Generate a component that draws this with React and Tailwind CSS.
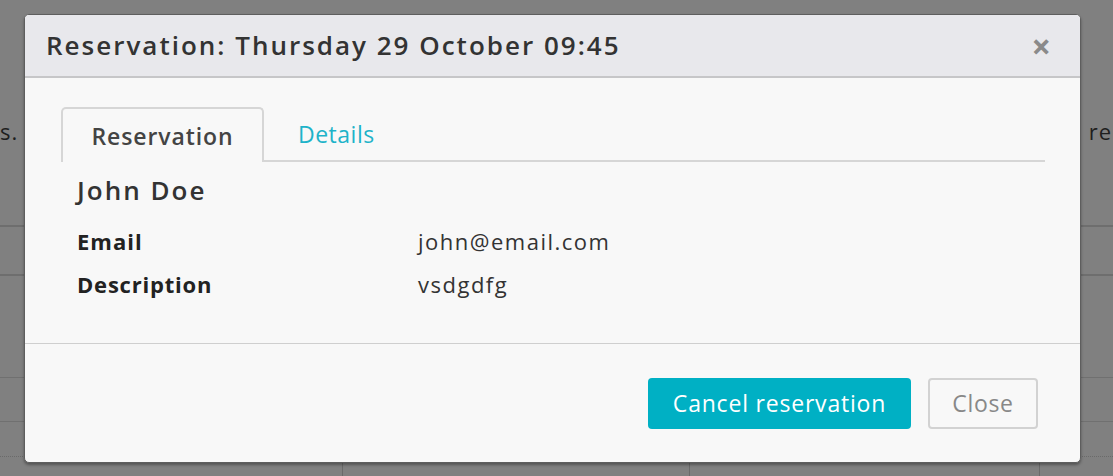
export default function App() {
  return (
    <div className="relative h-[476px] w-[1113px] overflow-hidden bg-[#808080]" style={{ fontFamily: "'Open Sans', sans-serif" }}>
      {/* page behind the overlay */}
      <div className="flex h-full flex-col">
        <div className="flex h-[225px] items-start justify-between pr-[1px] pt-[115px] text-[22px] tracking-[1px] text-[#1e1e1e]">
          <span>s.</span>
          <span>re</span>
        </div>
        <div className="h-[49px] border-t-2 border-[#6e6e6e]" />
        <div className="h-[103px] border-t-2 border-[#6e6e6e]" />
        <div className="h-[44px] border-t border-[#707070]" />
        <div className="h-[35px] border-t border-[#707070]" />
        <div className="grid flex-1 grid-cols-[343px_347px_350px_1fr] border-t border-dotted border-[#6a6a6a]">
          <div className="border-r border-[#6a6a6a]" />
          <div className="border-r border-[#6a6a6a]" />
          <div className="border-r border-[#6a6a6a]" />
          <div />
        </div>
      </div>

      {/* modal */}
      <div className="absolute left-[24px] top-[14px] flex h-[449px] w-[1057px] flex-col overflow-hidden rounded-[5px] border border-[#5e5e5e] bg-[#f8f8f8] shadow-[0_2px_3px_rgba(0,0,0,0.35)]">
        <div className="flex h-[63px] shrink-0 items-center justify-between border-b-2 border-[#c6c6c8] bg-[#e8e8ec] pl-[21px] pr-[29px]">
          <h2 className="text-[26px] font-semibold tracking-[2px] text-[#333]">Reservation: Thursday 29 October 09:45</h2>
          <span className="mt-[1px] text-[34px] font-bold leading-none text-[#8a8a8a]">×</span>
        </div>

        <div className="flex h-[266px] shrink-0 flex-col border-b border-[#cfcfcf] pl-[36px] pr-[35px] pt-[29px]">
          <div className="flex h-[55px] items-end border-b-2 border-[#d6d6d6]">
            <div className="-mb-[2px] flex h-[55px] w-[203px] items-center justify-center rounded-t-[5px] border-2 border-b-0 border-[#d6d6d6] bg-[#f8f8f8] pt-[1px] text-[23px] font-semibold tracking-[0.9px] text-[#444]">
              Reservation
            </div>
            <div className="flex h-[53px] items-center pl-[34px] pt-[1px] text-[23px] tracking-[0.5px] text-[#1eb3c9]">Details</div>
          </div>
          <div className="pl-[16px]">
            <div className="mt-[11px] text-[26px] font-semibold leading-[34px] tracking-[2px] text-[#333]">John Doe</div>
            <div className="mt-[20px] grid grid-cols-[341px_1fr] gap-y-[15px] text-[22px] leading-[28px]">
              <div className="font-bold tracking-[1px] text-[#222]">Email</div>
              <div className="tracking-[1.5px] text-[#333]">john@email.com</div>
              <div className="font-bold tracking-[0.8px] text-[#222]">Description</div>
              <div className="tracking-[1.5px] text-[#333]">vsdgdfg</div>
            </div>
          </div>
        </div>

        <div className="flex flex-1 items-start justify-end gap-[17px] pr-[42px] pt-[34px]">
          <button className="h-[51px] w-[263px] rounded-[4px] bg-[#00b0c4] text-[23px] tracking-[0.8px] text-white">Cancel reservation</button>
          <button className="h-[51px] w-[110px] rounded-[4px] border-2 border-[#d2d2d2] bg-[#f8f8f8] text-[23px] tracking-[0.7px] text-[#888]">Close</button>
        </div>
      </div>
    </div>
  )
}
